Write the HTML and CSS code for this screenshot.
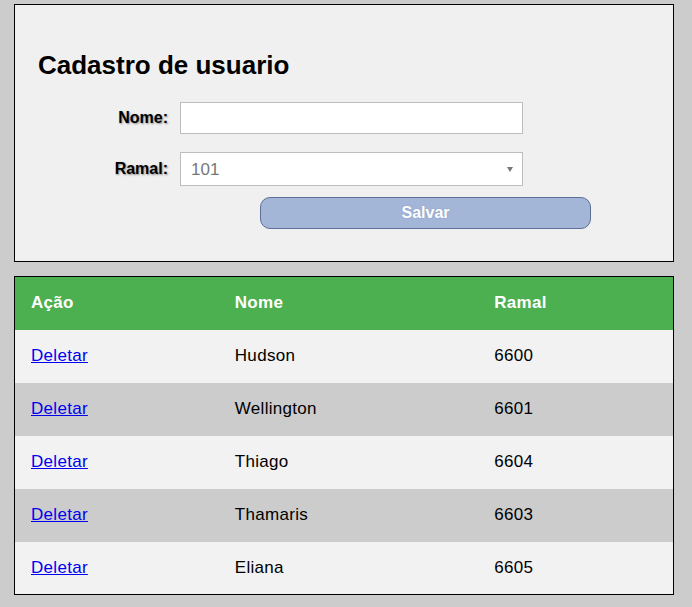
FILE: index.html
```html
<!DOCTYPE html>
<html lang="pt">
<head>
<meta charset="utf-8">
<title>Cadastro de usuario</title>
<link rel="stylesheet" href="styles.css">
</head>
<body>
<div class="page">
  <form class="card">
    <h2 class="title">Cadastro de usuario</h2>
    <div class="row row-name">
      <label class="label" for="nome">Nome:</label>
      <input class="input" id="nome" type="text">
    </div>
    <div class="row row-ramal">
      <label class="label" for="ramal">Ramal:</label>
      <div class="select-wrap">
        <select class="select" id="ramal">
          <option>101</option>
        </select>
      </div>
    </div>
    <button class="btn" type="button">Salvar</button>
  </form>

  <table class="grid">
    <colgroup>
      <col class="c1"><col class="c2"><col class="c3">
    </colgroup>
    <thead>
      <tr><th>Ação</th><th>Nome</th><th>Ramal</th></tr>
    </thead>
    <tbody>
      <tr><td><a href="#">Deletar</a></td><td>Hudson</td><td>6600</td></tr>
      <tr><td><a href="#">Deletar</a></td><td>Wellington</td><td>6601</td></tr>
      <tr><td><a href="#">Deletar</a></td><td>Thiago</td><td>6604</td></tr>
      <tr><td><a href="#">Deletar</a></td><td>Thamaris</td><td>6603</td></tr>
      <tr><td><a href="#">Deletar</a></td><td>Eliana</td><td>6605</td></tr>
    </tbody>
  </table>
</div>
</body>
</html>
```

FILE: styles.css
```css
html, body {
  margin: 0;
  background: #cccccc;
  font-family: "Liberation Sans", Arial, sans-serif;
  color: #000;
}

.page {
  padding: 4px 0 0 14px;
  width: 660px;
  display: flex;
  flex-direction: column;
  gap: 14px;
}

.card {
  margin: 0;
  background: #f0f0f0;
  border: 1px solid #000;
  padding: 45px 0 32px 0;
  display: flex;
  flex-direction: column;
}

.title {
  margin: 0 0 22px 23px;
  font-size: 26px;
  line-height: 30px;
  font-weight: bold;
}

.row {
  display: flex;
  align-items: center;
  gap: 12px;
}

.row-name {
  margin-bottom: 18px;
}

.row-ramal {
  margin-bottom: 11px;
}

.label {
  width: 153px;
  text-align: right;
  font-weight: bold;
  font-size: 16px;
  text-shadow: 1px 1px 2px #888;
}

.input {
  box-sizing: border-box;
  width: 343px;
  height: 32px;
  margin: 0;
  border: 1px solid #bdbdbd;
  background: #fff;
  font: 16px "Liberation Sans", Arial, sans-serif;
  padding: 0 10px;
  outline: none;
}

.select-wrap {
  position: relative;
  width: 343px;
  height: 34px;
}

.select {
  box-sizing: border-box;
  width: 100%;
  height: 34px;
  margin: 0;
  border: 1px solid #bdbdbd;
  border-radius: 0;
  background: #fff;
  color: #777;
  font: 17px "Liberation Sans", Arial, sans-serif;
  padding: 0 10px;
  -webkit-appearance: none;
  appearance: none;
  outline: none;
}

.select-wrap::after {
  content: "";
  position: absolute;
  right: 10px;
  top: 15px;
  border-left: 3px solid transparent;
  border-right: 3px solid transparent;
  border-top: 5px solid #777;
  pointer-events: none;
}

.btn {
  box-sizing: border-box;
  margin: 0 0 0 245px;
  width: 331px;
  height: 32px;
  background: #a3b6d8;
  border: 1px solid #5e6f96;
  border-radius: 10px;
  color: #fff;
  font: bold 16px "Liberation Sans", Arial, sans-serif;
  text-shadow: 0 0 2px #8a9cc0;
  padding: 0;
}

.grid {
  width: 660px;
  border-collapse: collapse;
  table-layout: fixed;
  border: 1px solid #000;
  font-size: 17px;
  letter-spacing: 0.3px;
}

.c1 { width: 204px; }
.c2 { width: 259px; }
.c3 { width: 195px; }

.grid th,
.grid td {
  height: 53px;
  box-sizing: border-box;
  padding: 0 16px;
  text-align: left;
  vertical-align: middle;
}

.grid th {
  background: #4caf50;
  color: #fff;
  font-weight: bold;
}

.grid tbody tr:nth-child(odd) td {
  background: #f2f2f2;
}

.grid tbody tr:nth-child(even) td {
  background: #cccccc;
}

.grid a {
  color: #0000ee;
  text-decoration: underline;
}
```
